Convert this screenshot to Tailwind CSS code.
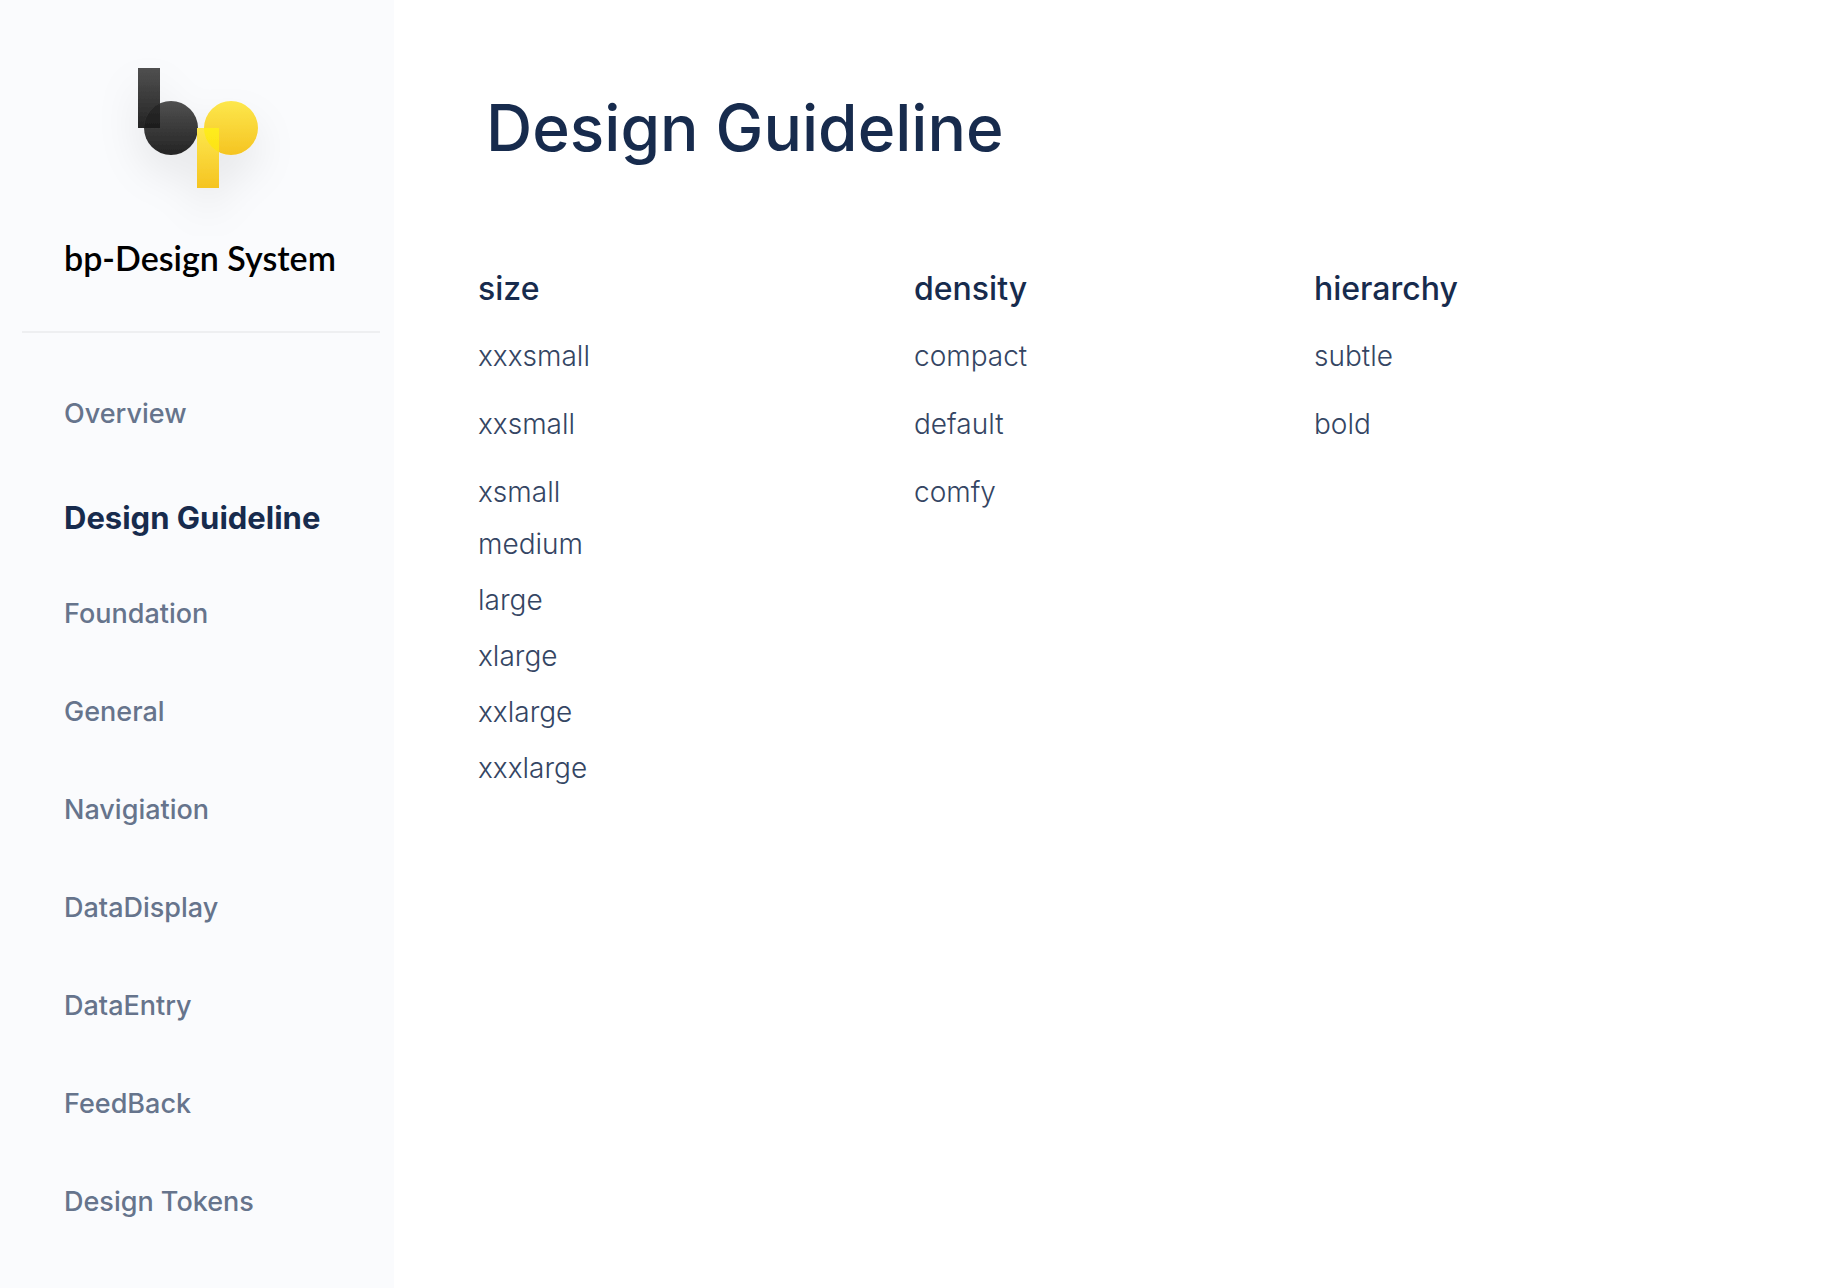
<!DOCTYPE html>
<html lang="en">
<head>
<meta charset="utf-8">
<meta name="viewport" content="width=device-width, initial-scale=1">
<title>bp-Design System</title>
<script src="https://cdn.jsdelivr.net/npm/@tailwindcss/browser@4"></script>
</head>
<body class="bg-white">
<div class="flex min-h-screen">
  <aside class="w-[394px] shrink-0 bg-[#fafbfd] font-['Inter',sans-serif] text-[27px] leading-10 font-medium text-[#66748c]">
    <header class="flex flex-col pt-7">
      <svg class="mx-auto h-[208px] w-[234px]" viewBox="80 28 234 208" role="img" aria-label="bp logo">
        <defs>
          <linearGradient id="dark" x1="0" y1="0" x2="0" y2="1"><stop stop-color="#505050"/><stop offset="1" stop-color="#242424"/></linearGradient>
          <linearGradient id="gold" x1="0" y1="0" x2="0" y2="1"><stop stop-color="#fde74c"/><stop offset="1" stop-color="#f5c422"/></linearGradient>
          <linearGradient id="darkOverlap" x1="0" y1="0" x2="0" y2="1"><stop stop-color="#2b2b2b"/><stop offset="1" stop-color="#101010"/></linearGradient>
          <linearGradient id="goldOverlap" x1="0" y1="0" x2="0" y2="1"><stop stop-color="#fff822"/><stop offset="1" stop-color="#fde116"/></linearGradient>
          <clipPath id="stemB"><rect x="138" y="68" width="22" height="60"/></clipPath>
          <clipPath id="stemP"><rect x="197" y="128" width="22" height="60"/></clipPath>
          <filter id="shadow" x="-60%" y="-60%" width="220%" height="220%"><feDropShadow dx="0" dy="20" stdDeviation="20" flood-color="#000" flood-opacity=".08"/></filter>
        </defs>
        <g filter="url(#shadow)">
          <rect x="138" y="68" width="22" height="60" fill="url(#dark)"/>
          <circle cx="171" cy="128" r="27" fill="url(#dark)"/>
          <circle cx="171" cy="128" r="27" fill="url(#darkOverlap)" clip-path="url(#stemB)"/>
          <circle cx="231" cy="128" r="27" fill="url(#gold)"/>
          <rect x="197" y="128" width="22" height="60" fill="url(#gold)"/>
          <circle cx="231" cy="128" r="27" fill="url(#goldOverlap)" clip-path="url(#stemP)"/>
        </g>
      </svg>
      <p class="pl-16 font-['Lato',sans-serif] text-[34px] leading-11 font-semibold text-black">bp-Design System</p>
      <hr class="mt-[51px] mr-3.5 ml-[22px] border-t-2 border-[#eeeff1]">
    </header>
    <nav class="pt-8 pl-16" aria-label="Main">
      <a href="#overview" class="flex h-[98px] items-center">Overview</a>
      <a href="#guideline" aria-current="page" class="flex h-[102px] items-center pt-2 text-[31px] font-bold text-[#172b4d]">Design Guideline</a>
      <a href="#foundation" class="flex h-[98px] items-center">Foundation</a>
      <a href="#general" class="flex h-[98px] items-center">General</a>
      <a href="#navigation" class="flex h-[98px] items-center">Navigiation</a>
      <a href="#data-display" class="flex h-[98px] items-center">DataDisplay</a>
      <a href="#data-entry" class="flex h-[98px] items-center">DataEntry</a>
      <a href="#feedback" class="flex h-[98px] items-center">FeedBack</a>
      <a href="#tokens" class="flex h-[98px] items-center">Design Tokens</a>
    </nav>
  </aside>
  <main class="min-w-0 grow pt-[88px] pl-[84px] font-['Inter',sans-serif] text-[#172b4d]">
    <h1 class="pl-2 text-[64px] leading-20 font-medium">Design Guideline</h1>
    <div class="grid grid-cols-[436fr_400fr_520fr] pt-[101px] text-[28px] leading-10 font-light text-[#344563]">
      <section>
        <h2 class="text-[32px] leading-10 font-medium text-[#172b4d]">size</h2>
        <ul class="flex flex-col gap-7 pt-[27px]">
          <li>xxxsmall</li>
          <li>xxsmall</li>
          <li>xsmall</li>
        </ul>
        <ul class="flex flex-col gap-4 pt-3">
          <li>medium</li>
          <li>large</li>
          <li>xlarge</li>
          <li>xxlarge</li>
          <li>xxxlarge</li>
        </ul>
      </section>
      <section>
        <h2 class="text-[32px] leading-10 font-medium text-[#172b4d]">density</h2>
        <ul class="flex flex-col gap-7 pt-[27px]">
          <li>compact</li>
          <li>default</li>
          <li>comfy</li>
        </ul>
      </section>
      <section>
        <h2 class="text-[32px] leading-10 font-medium text-[#172b4d]">hierarchy</h2>
        <ul class="flex flex-col gap-7 pt-[27px]">
          <li>subtle</li>
          <li>bold</li>
        </ul>
      </section>
    </div>
  </main>
</div>
</body>
</html>
